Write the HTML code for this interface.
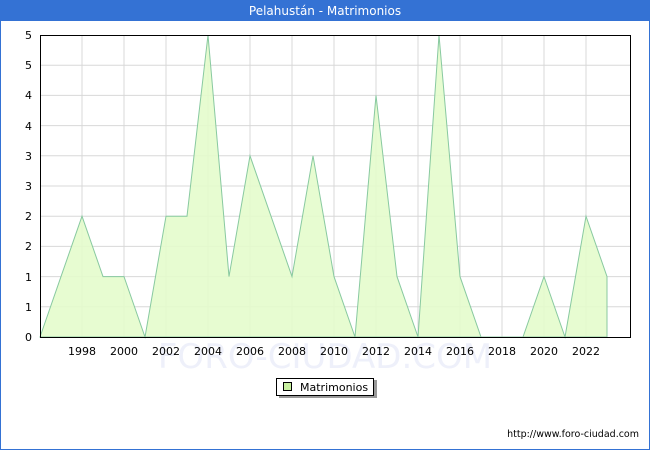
<!DOCTYPE html>
<html><head><meta charset="utf-8"><style>
html,body{margin:0;padding:0;background:#fff;}
body{width:650px;height:450px;overflow:hidden;font-family:"DejaVu Sans","Liberation Sans",sans-serif;}
</style></head><body>
<svg width="650" height="450" xmlns="http://www.w3.org/2000/svg" font-family="DejaVu Sans, Liberation Sans, sans-serif">
<rect x="0" y="0" width="650" height="450" fill="#fff"/>
<rect x="0.5" y="0.5" width="649" height="449" fill="none" stroke="#3472d4"/>
<rect x="0" y="0" width="650" height="21" fill="#3472d4"/>
<text x="325" y="15" font-size="12" fill="#fff" text-anchor="middle">Pelahustán - Matrimonios</text>
<text x="325" y="368" font-size="34" fill="#eef0fa" text-anchor="middle">FORO-CIUDAD.COM</text>
<g stroke="#d8d8d8" stroke-width="1">
<line x1="40" y1="306.8" x2="630" y2="306.8"/><line x1="40" y1="276.6" x2="630" y2="276.6"/>
<line x1="40" y1="246.4" x2="630" y2="246.4"/><line x1="40" y1="216.2" x2="630" y2="216.2"/>
<line x1="40" y1="186" x2="630" y2="186"/><line x1="40" y1="155.8" x2="630" y2="155.8"/>
<line x1="40" y1="125.6" x2="630" y2="125.6"/><line x1="40" y1="95.4" x2="630" y2="95.4"/>
<line x1="40" y1="65.2" x2="630" y2="65.2"/>
<line x1="82" y1="35" x2="82" y2="337"/><line x1="124" y1="35" x2="124" y2="337"/>
<line x1="166" y1="35" x2="166" y2="337"/><line x1="208" y1="35" x2="208" y2="337"/>
<line x1="250" y1="35" x2="250" y2="337"/><line x1="292" y1="35" x2="292" y2="337"/>
<line x1="334" y1="35" x2="334" y2="337"/><line x1="376" y1="35" x2="376" y2="337"/>
<line x1="418" y1="35" x2="418" y2="337"/><line x1="460" y1="35" x2="460" y2="337"/>
<line x1="502" y1="35" x2="502" y2="337"/><line x1="544" y1="35" x2="544" y2="337"/>
<line x1="586" y1="35" x2="586" y2="337"/>
</g>
<polygon fill="#e4fccc" fill-opacity="0.9" stroke="#88c9a0" stroke-width="1" points="40,337 61,276.6 82,216.2 103,276.6 124,276.6 145,337 166,216.2 187,216.2 208,35 229,276.6 250,155.8 271,216.2 292,276.6 313,155.8 334,276.6 355,337 376,95.4 397,276.6 418,337 439,35 460,276.6 481,337 502,337 523,337 544,276.6 565,337 586,216.2 607,276.6 607,337"/>
<rect x="40.5" y="35.5" width="590" height="302" fill="none" stroke="#000" stroke-width="1"/>
<g font-size="11" fill="#000" text-anchor="end">
<text x="32" y="341">0</text><text x="32" y="311">1</text><text x="32" y="281">1</text>
<text x="32" y="250">2</text><text x="32" y="220">2</text><text x="32" y="190">3</text>
<text x="32" y="160">3</text><text x="32" y="130">4</text><text x="32" y="99">4</text>
<text x="32" y="69">5</text><text x="32" y="39">5</text>
</g>
<g font-size="11" fill="#000" text-anchor="middle">
<text x="82" y="355">1998</text><text x="124" y="355">2000</text><text x="166" y="355">2002</text>
<text x="208" y="355">2004</text><text x="250" y="355">2006</text><text x="292" y="355">2008</text>
<text x="334" y="355">2010</text><text x="376" y="355">2012</text><text x="418" y="355">2014</text>
<text x="460" y="355">2016</text><text x="502" y="355">2018</text><text x="544" y="355">2020</text>
<text x="586" y="355">2022</text>
</g>
<rect x="279" y="380" width="98" height="18" fill="#999"/>
<rect x="276.5" y="378.5" width="97" height="17" fill="#fff" stroke="#000"/>
<rect x="283.5" y="382.5" width="8" height="8" fill="#c8f0a0" stroke="#000"/>
<text x="300" y="391" font-size="11" fill="#000">Matrimonios</text>
<text x="639" y="437" font-size="9.5" fill="#000" text-anchor="end">http://www.foro-ciudad.com</text>
</svg>
</body></html>
